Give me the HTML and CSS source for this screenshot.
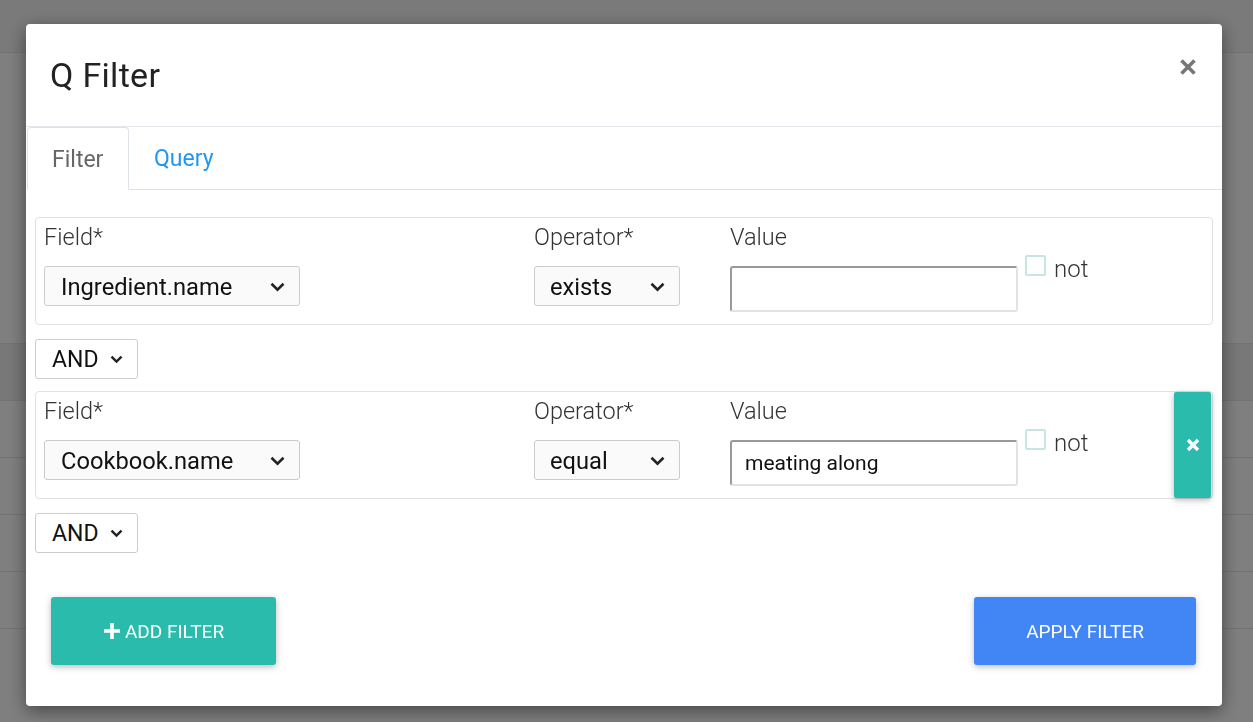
FILE: index.html
```html
<!DOCTYPE html>
<html lang="en">
<head>
<meta charset="utf-8">
<title>Q Filter</title>
<link rel="stylesheet" href="styles.css">
</head>
<body>
<div class="page">
  <div class="topbar"></div>
  <div class="page-body"></div>
  <div class="table">
    <div class="trow dark"></div>
    <div class="trow"></div>
    <div class="trow"></div>
    <div class="trow"></div>
    <div class="trow"></div>
    <div class="trow"></div>
  </div>
</div>
<div class="backdrop"></div>
<div class="modal">
  <div class="modal-header">
    <h4 class="modal-title">Q Filter</h4>
    <button class="close" aria-label="Close">
      <svg width="18" height="18" viewBox="0 0 18 18"><path d="M2.5 2.5 L15.5 15.5 M15.5 2.5 L2.5 15.5" stroke="#777" stroke-width="3.6" stroke-linecap="butt"/></svg>
    </button>
  </div>
  <ul class="tabs">
    <li class="tab active">Filter</li>
    <li class="tab">Query</li>
    <li class="tab-fill"></li>
  </ul>
  <div class="modal-body">
    <div class="filter-row">
      <div class="filter-cols">
        <div class="col col-field">
          <div class="label">Field*</div>
          <div class="select sel-field"><span>Ingredient.name</span><svg class="chev" width="15" height="10" viewBox="0 0 15 10"><path d="M1.5 1.8 L7.5 7.6 L13.5 1.8" fill="none" stroke="#222" stroke-width="2.6"/></svg></div>
        </div>
        <div class="col col-op">
          <div class="label">Operator*</div>
          <div class="select sel-op"><span>exists</span><svg class="chev" width="15" height="10" viewBox="0 0 15 10"><path d="M1.5 1.8 L7.5 7.6 L13.5 1.8" fill="none" stroke="#222" stroke-width="2.6"/></svg></div>
        </div>
        <div class="col col-val">
          <div class="label">Value</div>
          <div class="input"></div>
        </div>
        <label class="not"><span class="check"></span><span>not</span></label>
      </div>
    </div>
    <div class="select sel-and"><span>AND</span><svg class="chev" width="13" height="9" viewBox="0 0 13 9"><path d="M1.5 1.6 L6.5 6.6 L11.5 1.6" fill="none" stroke="#222" stroke-width="2.4"/></svg></div>

    <div class="filter-row">
      <div class="filter-cols">
        <div class="col col-field">
          <div class="label">Field*</div>
          <div class="select sel-field"><span>Cookbook.name</span><svg class="chev" width="15" height="10" viewBox="0 0 15 10"><path d="M1.5 1.8 L7.5 7.6 L13.5 1.8" fill="none" stroke="#222" stroke-width="2.6"/></svg></div>
        </div>
        <div class="col col-op">
          <div class="label">Operator*</div>
          <div class="select sel-op"><span>equal</span><svg class="chev" width="15" height="10" viewBox="0 0 15 10"><path d="M1.5 1.8 L7.5 7.6 L13.5 1.8" fill="none" stroke="#222" stroke-width="2.6"/></svg></div>
        </div>
        <div class="col col-val">
          <div class="label">Value</div>
          <div class="input">meating along</div>
        </div>
        <label class="not"><span class="check"></span><span>not</span></label>
      </div>
      <button class="remove" aria-label="Remove">
        <svg width="14" height="14" viewBox="0 0 14 14"><path d="M2 2 L12 12 M12 2 L2 12" stroke="#fff" stroke-width="3.4"/></svg>
      </button>
    </div>
    <div class="select sel-and"><span>AND</span><svg class="chev" width="13" height="9" viewBox="0 0 13 9"><path d="M1.5 1.6 L6.5 6.6 L11.5 1.6" fill="none" stroke="#222" stroke-width="2.4"/></svg></div>

    <div class="actions">
      <button class="btn btn-add"><svg width="18" height="18" viewBox="0 0 18 18"><path d="M9 1 V17 M1 9 H17" stroke="#fff" stroke-width="3.6"/></svg><span>ADD FILTER</span></button>
      <button class="btn btn-apply">APPLY FILTER</button>
    </div>
  </div>
</div>
</body>
</html>
```
FILE: styles.css
```css
* { box-sizing: border-box; }
html, body { margin: 0; padding: 0; }
body {
  font-family: Roboto, "Liberation Sans", Arial, sans-serif;
  background: #fff;
  width: 1253px;
  height: 722px;
  overflow: hidden;
}
.page { height: 722px; display: flex; flex-direction: column; }
.topbar { height: 53px; background: #f4f4f4; border-bottom: 1px solid #e6e6e6; }
.page-body { height: 290px; background: #fff; }
.table { display: flex; flex-direction: column; }
.trow { height: 57px; border-top: 1px solid #e6e6e6; background: #fff; }
.trow.dark { background: #f0f0f0; }

.backdrop {
  position: fixed; inset: 0;
  background: rgba(0,0,0,0.5);
}
.modal {
  position: fixed;
  left: 26px; top: 24px;
  width: 1196px; height: 682px;
  background: #fff;
  border-radius: 4px;
  box-shadow: 0 5px 18px rgba(0,0,0,0.45);
  display: flex; flex-direction: column;
}
.modal-header {
  height: 103px;
  border-bottom: 1px solid #e3e7ec;
  display: flex; align-items: flex-start; justify-content: space-between;
  padding: 0 25px 0 24px;
}
.modal-title {
  margin: 0;
  font-weight: 400;
  font-size: 34px;
  line-height: 40px;
  color: #222;
  padding-top: 31px;
  letter-spacing: 0.3px;
}
.close {
  border: 0; background: none; padding: 0; margin-top: 34px;
  width: 18px; height: 18px; display: flex;
}
.tabs {
  list-style: none; margin: 0; padding: 0 0 0 1px;
  display: flex; height: 63px;
}
.tab {
  font-size: 23px; line-height: 60px;
  padding: 2px 26px 0 25px;
  color: #2196f3;
  border-bottom: 1px solid #dee3ea;
}
.tab.active {
  color: #666;
  border: 1px solid #dee3ea;
  border-bottom-color: transparent;
  border-radius: 4px 4px 0 0;
  width: 102px;
  padding-left: 24px;
}
.tab-fill { flex: 1; border-bottom: 1px solid #dee3ea; }

.modal-body { padding: 27px 9px 0 9px; display: flex; flex-direction: column; }
.filter-row {
  border: 1px solid #dee2e6;
  border-radius: 4px;
  display: flex;
  min-height: 108px;
}
.filter-cols {
  flex: 1;
  display: flex;
  align-items: flex-start;
  padding: 3px 0 0 8px;
}
.col { display: flex; flex-direction: column; }
.col-field { width: 490px; }
.col-op { width: 196px; }
.col-val { width: 287px; }
.label {
  font-size: 23.5px; font-weight: 300; color: #333;
  line-height: 32px; height: 32px; margin-bottom: 13px;
  white-space: nowrap;
}
.select {
  height: 40px;
  border: 1px solid #ccc;
  border-radius: 3px;
  background: #fafafa;
  display: flex; align-items: center; justify-content: space-between;
  font-size: 23.7px; color: #111;
  white-space: nowrap;
}
.sel-field { width: 256px; padding: 1px 14px 0 16px; }
.sel-op { width: 146px; padding: 1px 14px 0 15px; }
.sel-and {
  width: 103px; height: 40px; padding: 1px 14px 0 16px;
  margin: 14px 0 12px 0;
  background: #fff;
  font-size: 23px;
}
.sel-and:last-of-type { margin-bottom: 0; }
.chev { flex: none; }
.input {
  width: 288px; height: 46px;
  border-top: 2px solid #999;
  border-left: 2px solid #999;
  border-right: 2px solid #e2e2e2;
  border-bottom: 2px solid #e2e2e2;
  border-radius: 3px;
  font-size: 21px; color: #111;
  padding: 0 13px;
  line-height: 42px;
  white-space: nowrap;
}
.not {
  display: flex; align-items: flex-start; gap: 8px;
  margin: 34px 0 0 8px;
  font-size: 24px; font-weight: 300; color: #333;
}
.check {
  width: 21px; height: 21px;
  border: 2px solid #c7e6e3; border-radius: 2px;
  margin-top: 0;
}
.not span:last-child { line-height: 28px; margin-top: 0; }
.remove {
  width: 37px; border: 0; margin: 0 1px 0 0;
  background: #2bbbad; border-radius: 2px;
  box-shadow: 0 2px 5px rgba(0,0,0,0.18), 0 2px 10px rgba(0,0,0,0.12);
  display: flex; align-items: center; justify-content: center;
  padding: 0;
}
.actions {
  display: flex; justify-content: space-between;
  padding: 32px 16px 0 16px;
}
.btn {
  height: 68px; border: 0; border-radius: 3px;
  color: #fff; font-family: inherit; font-size: 19px; font-weight: 400;
  display: flex; align-items: center; justify-content: center; gap: 4px;
  box-shadow: 0 2px 5px rgba(0,0,0,0.16), 0 2px 10px rgba(0,0,0,0.12);
}
.btn-add { width: 225px; background: #2bbbad; }
.btn-apply { width: 222px; background: #4285f4; margin-right: 1px; }
```
